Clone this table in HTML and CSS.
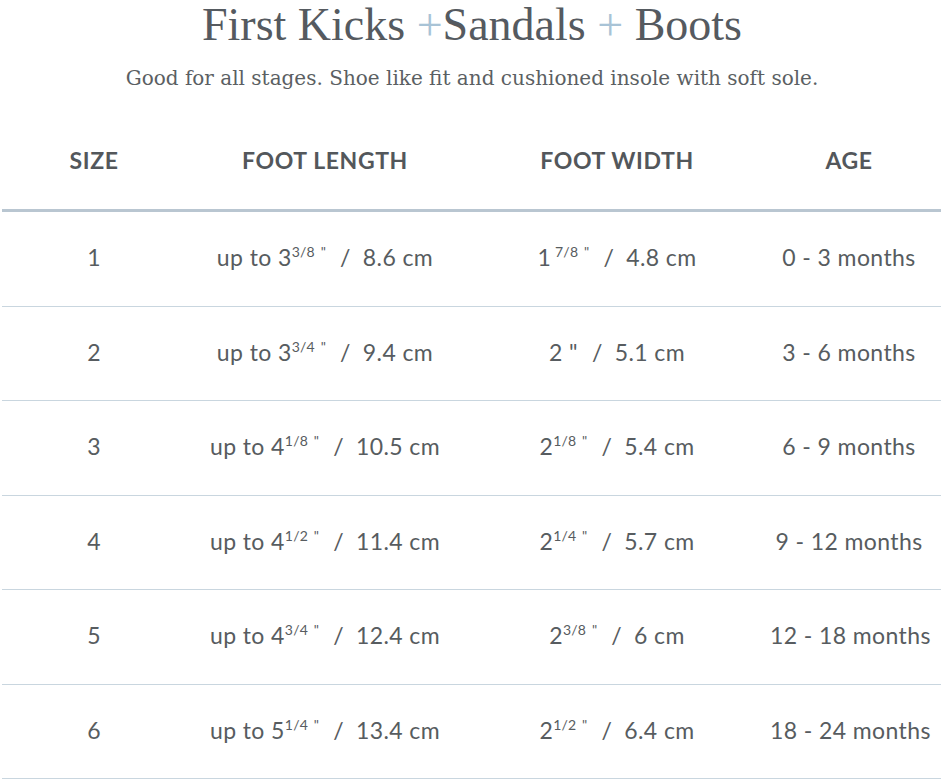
FILE: index.html
```html
<!DOCTYPE html>
<html lang="en">
<head>
    <meta charset="UTF-8">
    <meta name="viewport" content="width=device-width, initial-scale=1.0">
    <title>Size Chart</title>
    <link rel="stylesheet" href="styles.css">
</head>
<body>
    <h1 class="title">First Kicks <span class="plus">+</span>Sandals <span class="plus">+</span> Boots</h1>
    <p class="subtitle">Good for all stages. Shoe like fit and cushioned insole with soft sole.</p>

    <div class="chart">
        <div class="row head">
            <div class="cell">SIZE</div>
            <div class="cell">FOOT LENGTH</div>
            <div class="cell">FOOT WIDTH</div>
            <div class="cell">AGE</div>
        </div>
        <div class="row">
            <div class="cell">1</div>
            <div class="cell">up to 3<sup>3/8 <q>"</q></sup><span class="sep">/</span>8.6 cm</div>
            <div class="cell">1<sup> 7/8 <q>"</q></sup><span class="sep">/</span>4.8 cm</div>
            <div class="cell">0 - 3 months</div>
        </div>
        <div class="row">
            <div class="cell">2</div>
            <div class="cell">up to 3<sup>3/4 <q>"</q></sup><span class="sep">/</span>9.4 cm</div>
            <div class="cell">2 "<span class="sep">/</span>5.1 cm</div>
            <div class="cell">3 - 6 months</div>
        </div>
        <div class="row">
            <div class="cell">3</div>
            <div class="cell">up to 4<sup>1/8 <q>"</q></sup><span class="sep">/</span>10.5 cm</div>
            <div class="cell">2<sup>1/8 <q>"</q></sup><span class="sep">/</span>5.4 cm</div>
            <div class="cell">6 - 9 months</div>
        </div>
        <div class="row">
            <div class="cell">4</div>
            <div class="cell">up to 4<sup>1/2 <q>"</q></sup><span class="sep">/</span>11.4 cm</div>
            <div class="cell">2<sup>1/4 <q>"</q></sup><span class="sep">/</span>5.7 cm</div>
            <div class="cell">9 - 12 months</div>
        </div>
        <div class="row">
            <div class="cell">5</div>
            <div class="cell">up to 4<sup>3/4 <q>"</q></sup><span class="sep">/</span>12.4 cm</div>
            <div class="cell">2<sup>3/8 <q>"</q></sup><span class="sep">/</span>6 cm</div>
            <div class="cell">12 - 18 months</div>
        </div>
        <div class="row">
            <div class="cell">6</div>
            <div class="cell">up to 5<sup>1/4 <q>"</q></sup><span class="sep">/</span>13.4 cm</div>
            <div class="cell">2<sup>1/2 <q>"</q></sup><span class="sep">/</span>6.4 cm</div>
            <div class="cell">18 - 24 months</div>
        </div>
    </div>
</body>
</html>
```

FILE: styles.css
```css
body {
    margin: 0;
    background: #fff;
    color: #575c60;
}
.title {
    font-family: "Liberation Serif", serif;
    font-weight: normal;
    font-size: 46px;
    line-height: 50px;
    text-align: center;
    margin: 0;
    color: #555a60;
}
.plus {
    color: #a8c3d6;
}
.subtitle {
    font-family: "DejaVu Serif", serif;
    font-size: 20px;
    line-height: 28px;
    text-align: center;
    margin: 14px 0 0;
    color: #5b5f63;
}
.chart {
    margin: 0 3px 0 2px;
    font-family: Lato, sans-serif;
}
.row {
    display: grid;
    grid-template-columns: 184px 278px 306px 158px 1fr;
    height: 93.5px;
    align-items: center;
    border-bottom: 1px solid #c9d6df;
    font-size: 23px;
    letter-spacing: 0.4px;
}
.row .cell {
    padding-bottom: 3px;
}
.cell {
    text-align: center;
    white-space: nowrap;
}
.row.head {
    height: 117px;
    align-items: start;
    border-bottom: 3px solid #b9c6d1;
    font-weight: bold;
    font-size: 23px;
    letter-spacing: 0.6px;
    color: #53575b;
}
.row.head .cell {
    padding-top: 54px;
    padding-bottom: 0;
}
sup {
    font-size: 14px;
    vertical-align: 9px;
    line-height: 0;
    letter-spacing: 0.2px;
}
q {
    quotes: none;
    margin-left: 2px;
}
.sep {
    margin: 0 12px 0 14px;
}
```
